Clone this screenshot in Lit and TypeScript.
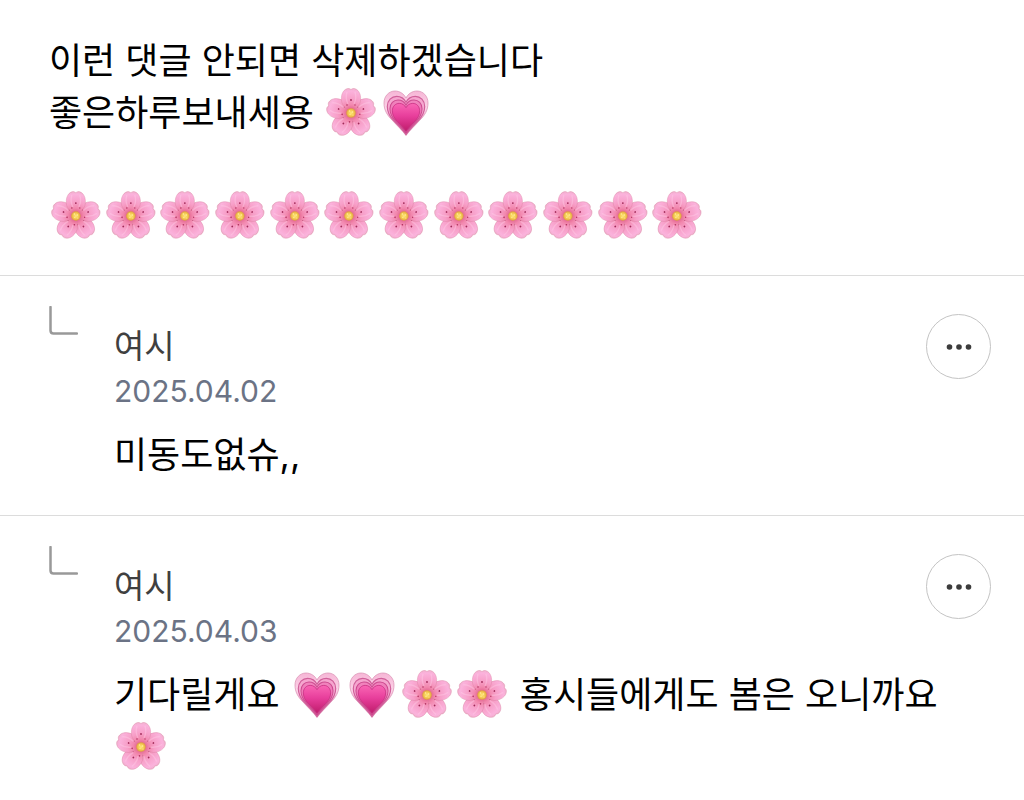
import { LitElement, html, css, svg } from "lit";
import { customElement, property } from "lit/decorators.js";

@customElement("emoji-blossom")
export class EmojiBlossom extends LitElement {
  static styles = css`
    :host {
      display: inline-block;
      width: 55px;
      height: 52px;
      vertical-align: top;
    }
    .art {
      display: block;
      width: 100%;
      height: 100%;
    }
  `;

  render() {
    return html`
      <svg class="art" viewBox="-27 -26 55 52" role="img" aria-label="🌸">
        <defs>
          <radialGradient id="petal" gradientUnits="userSpaceOnUse" cx="0" cy="0" r="25">
            <stop offset="0.15" stop-color="#e4658f" />
            <stop offset="0.32" stop-color="#f288ae" />
            <stop offset="0.55" stop-color="#f79fc8" />
            <stop offset="0.88" stop-color="#fbb2dc" />
            <stop offset="1" stop-color="#eeb0cb" />
          </radialGradient>
          <radialGradient id="core">
            <stop offset="0" stop-color="#ffe77c" />
            <stop offset="0.6" stop-color="#f4c950" />
            <stop offset="1" stop-color="#dc9a45" />
          </radialGradient>
        </defs>
        ${[144, 216, 72, 288, 0].map(
          (angle) => svg`
            <g transform="rotate(${angle})">
              <path
                d="M0 1C-4-3-7-6-9-10C-10-13-10-18-8-21C-7-23-4-25-2-24.500C-1-24-0.500-24 0-23.500C0.500-24 1-24 2-24.500C4-25 7-23 8-21C10-18 10-13 9-10C7-6 4-3 0 1Z"
                fill="url(#petal)" stroke="#d9809f" stroke-width="0.4" />
              <path d="M-4-21Q-6-15-3-9M4-21Q6-15 3-9" fill="none" stroke="#ffd0e8" stroke-width="1.400" opacity="0.4" />
              <circle cx="0" cy="-13" r="0.9" fill="#a02a58" />
              <circle cx="-4" cy="-8" r="0.8" fill="#b23562" />
              <circle cx="4" cy="-8" r="0.7" fill="#b23562" />
            </g>`
        )}
        <circle r="4.800" fill="url(#core)" />
        <g fill="#fff0a0">
          <circle cx="-1.500" cy="-2" r="0.7" />
          <circle cx="1.500" cy="-1" r="0.7" />
          <circle cx="-1" cy="1.500" r="0.6" />
          <circle cx="2" cy="2" r="0.6" />
        </g>
      </svg>
    `;
  }
}

@customElement("emoji-heart")
export class EmojiHeart extends LitElement {
  static styles = EmojiBlossom.styles;

  render() {
    const heart =
      "M0 22.500C-4 17-9 12.500-14 7C-19 2-22-3-22-10C-22-17-17-22-11-22C-6-22-2-19 0-15C2-19 6-22 11-22C17-22 22-17 22-10C22-3 19 2 14 7C9 12.500 4 17 0 22.500Z";
    return html`
      <svg class="art" viewBox="-27 -26 55 52" role="img" aria-label="💗">
        <defs>
          <linearGradient id="outer" x1="0" y1="0" x2="0" y2="1">
            <stop offset="0" stop-color="#f6b6d6" />
            <stop offset="0.4" stop-color="#fcd3e8" />
            <stop offset="0.75" stop-color="#ee8fc0" />
            <stop offset="1" stop-color="#cf3580" />
          </linearGradient>
          <linearGradient id="middle" x1="0" y1="0" x2="0" y2="1">
            <stop offset="0" stop-color="#f5a3cd" />
            <stop offset="0.45" stop-color="#f6aed4" />
            <stop offset="1" stop-color="#c9297a" />
          </linearGradient>
          <linearGradient id="inner" x1="0" y1="0" x2="0" y2="1">
            <stop offset="0" stop-color="#f084bd" />
            <stop offset="0.5" stop-color="#ee72b4" />
            <stop offset="1" stop-color="#c02070" />
          </linearGradient>
          <linearGradient id="center" x1="0" y1="0" x2="0" y2="1">
            <stop offset="0" stop-color="#f966b4" />
            <stop offset="0.45" stop-color="#e83f9c" />
            <stop offset="1" stop-color="#c01c6c" />
          </linearGradient>
        </defs>
        <path d=${heart} fill="url(#outer)" stroke="#d98db0" stroke-width="0.7" />
        <path d=${heart} transform="translate(0 2) scale(0.85)" fill="url(#middle)" stroke="#d0609a" stroke-width="1.400" />
        <path d=${heart} transform="translate(0 3) scale(0.73)" fill="url(#inner)" stroke="#cd4a8f" stroke-width="1.400" />
        <path d=${heart} transform="translate(0 4) scale(0.62)" fill="url(#center)" stroke="#c52d7f" stroke-width="1.200" />
      </svg>
    `;
  }
}

const blossom = html`<emoji-blossom></emoji-blossom>`;
const heart = html`<emoji-heart></emoji-heart>`;

@customElement("comment-reply")
export class CommentReply extends LitElement {
  @property() author = "";
  @property() date = "";

  static styles = css`
    :host {
      display: grid;
      grid-template-columns: 29px minmax(0, 1fr) auto;
      column-gap: 36px;
      align-items: start;
      padding: 30px 33px 34px 49px;
      border-top: 1px solid #dcdcdc;
    }
    .branch {
      display: block;
      width: 29px;
      height: 29px;
    }
    .head {
      display: flex;
      flex-direction: column;
      padding-top: 17px;
    }
    .author {
      font-size: 33px;
      line-height: 46px;
      color: #404040;
    }
    .date {
      font-size: 30px;
      line-height: 44px;
      color: #6b7385;
    }
    .body {
      grid-column: 2 / 4;
      margin: 16px 0 0;
      font-size: 36px;
      line-height: 52px;
      color: #000;
      word-break: keep-all;
    }
    .more {
      display: grid;
      place-items: center;
      width: 65px;
      height: 65px;
      margin-top: 8px;
      padding: 0;
      border: 1px solid #c4c4c4;
      border-radius: 50%;
      background: #fff;
    }
    .dots {
      width: 26px;
      height: 6px;
      fill: #3c3c3c;
    }
  `;

  render() {
    return html`
      <svg class="branch" viewBox="0 0 29 29" fill="none" stroke="#999" stroke-width="2.500" stroke-linecap="round" aria-hidden="true">
        <path d="M1.500 1V24.500Q1.500 27.500 4.500 27.500H28" />
      </svg>
      <div class="head">
        <span class="author">${this.author}</span>
        <time class="date">${this.date}</time>
      </div>
      <button class="more" type="button" aria-label="더보기">
        <svg class="dots" viewBox="0 0 26 6" aria-hidden="true">
          <circle cx="3.500" cy="3" r="2.800" />
          <circle cx="13" cy="3" r="2.800" />
          <circle cx="22.500" cy="3" r="2.800" />
        </svg>
      </button>
      <p class="body"><slot></slot></p>
    `;
  }
}

@customElement("app-root")
export class AppRoot extends LitElement {
  static styles = css`
    :host {
      display: block;
      background: #fff;
      color: #000;
      font-family: Inter, "Noto Sans CJK KR", sans-serif;
    }
    .comment {
      padding: 35px 49px 33px;
      font-size: 36px;
      line-height: 52px;
      word-break: keep-all;
    }
    .text {
      margin: 0 0 51px;
    }
    .blossoms {
      display: grid;
      grid-template-columns: repeat(12, 1fr);
      max-width: 656px;
    }
    .blossoms emoji-blossom {
      width: 100%;
    }
  `;

  render() {
    return html`
      <main>
        <article class="comment">
          <p class="text">이런 댓글 안되면 삭제하겠습니다<br />좋은하루보내세용 ${blossom}${heart}</p>
          <div class="blossoms">${Array.from({ length: 12 }, () => blossom)}</div>
        </article>
        <comment-reply author="여시" date="2025.04.02">미동도없슈,,</comment-reply>
        <comment-reply author="여시" date="2025.04.03">기다릴게요 ${heart}${heart}${blossom}${blossom} 홍시들에게도 봄은 오니까요 ${blossom}</comment-reply>
      </main>
    `;
  }
}
